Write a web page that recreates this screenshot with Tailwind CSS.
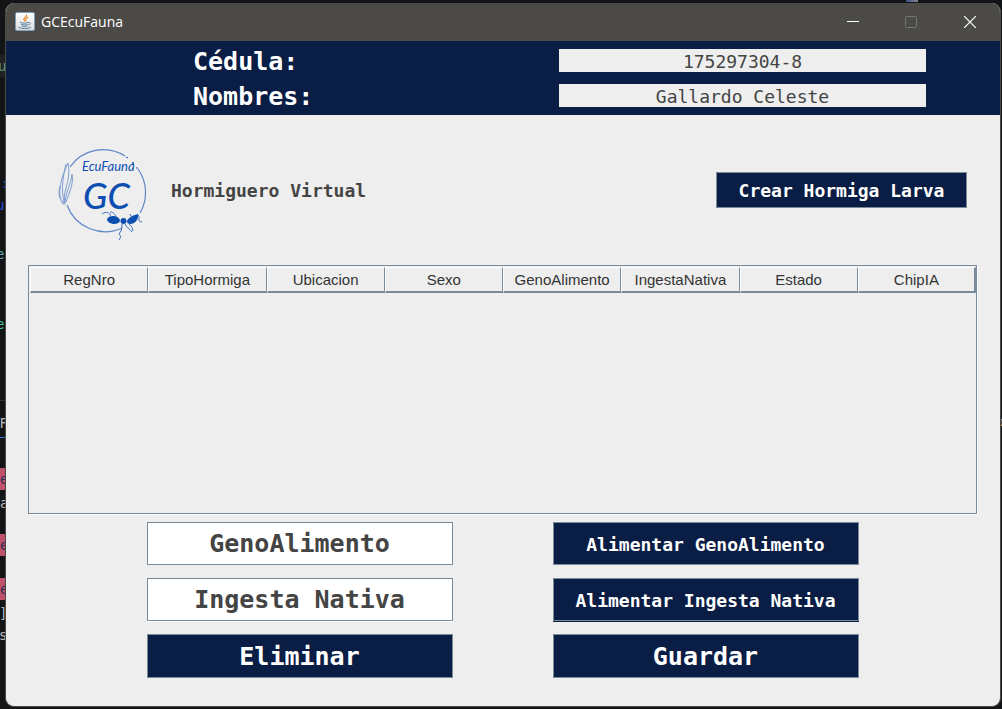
<!DOCTYPE html>
<html lang="es">
<head>
<meta charset="utf-8">
<title>GCEcuFauna</title>
<script src="https://cdn.jsdelivr.net/npm/@tailwindcss/browser@4"></script>
</head>
<body class="relative flex h-screen overflow-hidden bg-[#131416] pt-[3px] pr-px pb-[2px] pl-[5px]">

  <!-- editor behind the window, only its edge is visible -->
  <div aria-hidden="true" class="absolute inset-y-0 left-0 w-[20px] overflow-hidden font-['DejaVu_Sans_Mono',monospace] text-[14px] leading-[22px]">
    <div class="absolute top-[55px] left-0 h-[22px] w-full bg-[#202124]"></div>
    <span class="absolute top-[55px] -left-[2px] text-[#5f8f78]">u</span>
    <span class="absolute top-[172px] left-[1px] text-[#2f6be0]">:</span>
    <span class="absolute top-[194px] -left-[4px] text-[#2b49e0]">u</span>
    <span class="absolute top-[243px] -left-[4px] text-[#5fa8b8]">e</span>
    <span class="absolute top-[313px] -left-[4px] text-[#45c4a0]">e</span>
    <div class="absolute top-[400px] left-0 h-px w-full bg-[#333333]"></div>
    <span class="absolute top-[412px] left-0 text-[#b8b8b8]">R</span>
    <div class="absolute top-[437px] left-0 h-px w-full bg-[#2f7fd0]"></div>
    <span class="absolute top-[468px] left-0 h-[22px] w-full bg-[#c0536b] text-[#2b2b50]">e</span>
    <span class="absolute top-[492px] left-0 text-[#c0c0c0]">a</span>
    <span class="absolute top-[534px] left-0 h-[22px] w-full bg-[#c0536b] text-[#2b2b50]">e</span>
    <span class="absolute top-[578px] left-0 h-[22px] w-full bg-[#c0536b] text-[#2b2b50]">e</span>
    <span class="absolute top-[602px] -left-[1px] text-[#a0b4c4]">]</span>
    <span class="absolute top-[624px] -left-[1px] text-[#c0c0c0]">s</span>
  </div>
  <div aria-hidden="true" class="absolute top-0 right-[84px] h-[2px] w-[12px] bg-linear-to-r from-[#34508c] to-[#888888]"></div>
  <div aria-hidden="true" class="absolute top-[419px] right-0 h-[7px] w-px bg-linear-to-b from-[#a0a0a0] via-[#333333] to-[#c09a70]"></div>

  <div class="relative flex min-w-0 flex-1 flex-col overflow-hidden rounded-[9px] border border-t-0 border-[#4b4a47] bg-[#eeeeee]">
    <header class="flex h-[38px] shrink-0 items-center bg-[#4b4a47] pl-[9px]">
      <svg class="size-5" viewBox="0 0 20 20" aria-hidden="true">
        <defs><linearGradient id="tile" x1="0" y1="0" x2="0" y2="1"><stop offset="0" stop-color="#ffffff"/><stop offset="1" stop-color="#dcdcdc"/></linearGradient></defs>
        <rect x=".5" y=".5" width="19" height="18" rx="1.5" fill="url(#tile)" stroke="#7fa0ba"/>
        <path d="M11.500 3c1 2-3.400 2.500-2.600 4.500.3.800 1 1 1 1.800M12.600 5.500c-1.800 1-2.400 1.800-1.500 3" fill="none" stroke="#ee8a2a" stroke-width="1.200" stroke-linecap="round"/>
        <path d="M5.500 10.500c2 .9 6 .9 7.500 0M6.300 12.300c2 .9 5 .9 6.300 0M7 14c1.500.7 4 .7 5.300 0M4 15.500c3 1.500 8.500 1.500 11.500 0M13.500 10.500c2.500-.6 2.500 2 .2 2.500" fill="none" stroke="#56809f" stroke-width="1" stroke-linecap="round"/>
      </svg>
      <h1 class="ml-[6px] flex-1 font-['Open_Sans',sans-serif] text-[14px] leading-5 text-white">GCEcuFauna</h1>
      <button type="button" aria-label="Minimizar" class="flex h-full w-[58px] items-center justify-center">
        <svg class="size-3" viewBox="0 0 12 12" aria-hidden="true"><path d="M0 5.500h12" stroke="#fff"/></svg>
      </button>
      <button type="button" aria-label="Maximizar" disabled class="flex h-full w-[58px] items-center justify-center">
        <svg class="size-3" viewBox="0 0 12 12" aria-hidden="true"><rect x=".5" y=".5" width="11" height="11" rx="1" fill="none" stroke="#757471"/></svg>
      </button>
      <button type="button" aria-label="Cerrar" class="flex h-full w-[60px] items-center justify-center">
        <svg class="size-3" viewBox="0 0 12 12" aria-hidden="true"><path d="M0 0l12 12M12 0L0 12" stroke="#fff" stroke-width="1.200"/></svg>
      </button>
    </header>

    <section class="grid shrink-0 grid-cols-2 gap-y-3 bg-[#0a1d44] py-2 font-['DejaVu_Sans_Mono',monospace]">
      <label for="cedula" class="h-[23px] pl-[187px] text-[25px] leading-[26px] font-bold text-white">Cédula:</label>
      <input id="cedula" value="175297304-8" readonly class="mr-[74px] ml-[56px] h-[23px] min-w-0 bg-[#eeeeee] pt-[2px] text-center text-[18px] leading-[21px] text-[#444444]">
      <label for="nombres" class="h-[23px] pl-[187px] text-[25px] leading-[26px] font-bold text-white">Nombres:</label>
      <input id="nombres" value="Gallardo Celeste" readonly class="mr-[74px] ml-[56px] h-[23px] min-w-0 bg-[#eeeeee] pt-[2px] text-center text-[18px] leading-[21px] text-[#444444]">
    </section>

    <main class="flex min-h-0 flex-1 flex-col pr-[23px] pb-[28px] pl-[22px] font-['DejaVu_Sans_Mono',monospace]">
      <div class="flex h-[150px] shrink-0 items-center pr-[10px] pl-[22px]">
        <svg class="size-[110px]" viewBox="0 -5 110 110" fill="none" stroke="#0d4fb0" role="img" aria-label="EcuFauna GC">
          <path d="M20 27A40.500 40.500 0 0 1 75 16M88 29A40.500 40.500 0 0 1 90 73M72 88A40.500 40.500 0 0 1 17 65" stroke="#5f86c8" stroke-width="1.200"/>
          <path d="M13 64C8 58 10 46 12 38c2-6 4-10 6-15 2 9 0 18-2 25-2 7-2 11-1 16zM15 63c1-13 6-18 7-29 2 10-3 19-6 28M14 63c-5-4-6-9-4-17M16 24c-3 12-5 25-2 38" stroke="#7c9dd0" stroke-width="1"/>
          <g fill="#0d4fb0" stroke="none">
            <text x="32" y="31" font-family="Lato, sans-serif" font-style="italic" font-weight="400" font-size="13">EcuFauna</text>
            <text x="33" y="69" font-family="Lato, sans-serif" font-style="italic" font-weight="500" font-size="36">GC</text>
            <circle cx="77" cy="17.500" r=".8"/><circle cx="83" cy="23" r="1"/><circle cx="87" cy="28" r=".8"/>
            <ellipse cx="63.500" cy="80" rx="6.500" ry="4" transform="rotate(6 63.500 80)"/>
            <circle cx="73.500" cy="81" r="3"/>
            <path d="M77 81c2-4 7-6 11-7 1 5-3 10-8 10-2 0-3-1-3-3z"/>
          </g>
          <path d="M61 77c-1-5-5-6-9-3M66 77c-1-4-4-5-6-5M72 84c0 6-1 7-3 10 2 2 2 3 0 6M75 84c2 4 4 4 7 8M79 84c4 3 3 4 4 7M88 75c3 2-2 6 4 7M82 78l-2-4" stroke="#3a6dbd" stroke-width="1"/>
        </svg>
        <h2 class="ml-[11px] flex-1 pt-[2px] text-[18px] leading-6 font-bold text-[#444444]">Hormiguero Virtual</h2>
        <button type="button" class="h-[36px] w-[251px] border border-[#7a8a99] bg-[#0a1d44] pt-[2px] text-[18px] leading-6 font-bold text-white">Crear Hormiga Larva</button>
      </div>

      <div class="min-h-[120px] flex-1 border border-[#7a8a99] pt-px pl-px shadow-[1px_1px_0_#ffffff]">
        <table class="w-full table-fixed border-separate border-spacing-0 font-['Liberation_Sans',sans-serif] text-[15px] leading-[22px] text-[#333333]">
          <thead>
            <tr class="*:border-t *:border-r *:border-b-2 *:border-l *:border-t-white *:border-r-[#7a8a99] *:border-b-[#7a8a99] *:border-l-white *:p-0 *:pt-px *:text-center *:font-normal *:last:border-r-2">
              <th scope="col">RegNro</th>
              <th scope="col">TipoHormiga</th>
              <th scope="col">Ubicacion</th>
              <th scope="col">Sexo</th>
              <th scope="col">GenoAlimento</th>
              <th scope="col">IngestaNativa</th>
              <th scope="col">Estado</th>
              <th scope="col">ChipIA</th>
            </tr>
          </thead>
          <tbody></tbody>
        </table>
      </div>

      <div class="mx-auto mt-2 grid w-full max-w-[712px] shrink-0 grid-cols-2 grid-rows-[43px_43px_44px] gap-x-[100px] gap-y-[13px] font-bold *:border *:border-[#7a8a99]">
        <button type="button" class="bg-white text-[25px] leading-8 text-[#444444]">GenoAlimento</button>
        <button type="button" class="bg-[#0a1d44] pt-[2px] text-[18px] leading-6 text-white">Alimentar GenoAlimento</button>
        <button type="button" class="bg-white text-[25px] leading-8 text-[#444444] shadow-[0_1px_0_#ffffff]">Ingesta Nativa</button>
        <button type="button" class="bg-[#0a1d44] pt-[2px] text-[18px] leading-6 text-white shadow-[0_1px_0_#0a1d44]">Alimentar Ingesta Nativa</button>
        <button type="button" class="bg-[#0a1d44] pt-[2px] text-[25px] leading-8 text-white">Eliminar</button>
        <button type="button" class="bg-[#0a1d44] pt-[2px] text-[25px] leading-8 text-white">Guardar</button>
      </div>
    </main>
  </div>
</body>
</html>
